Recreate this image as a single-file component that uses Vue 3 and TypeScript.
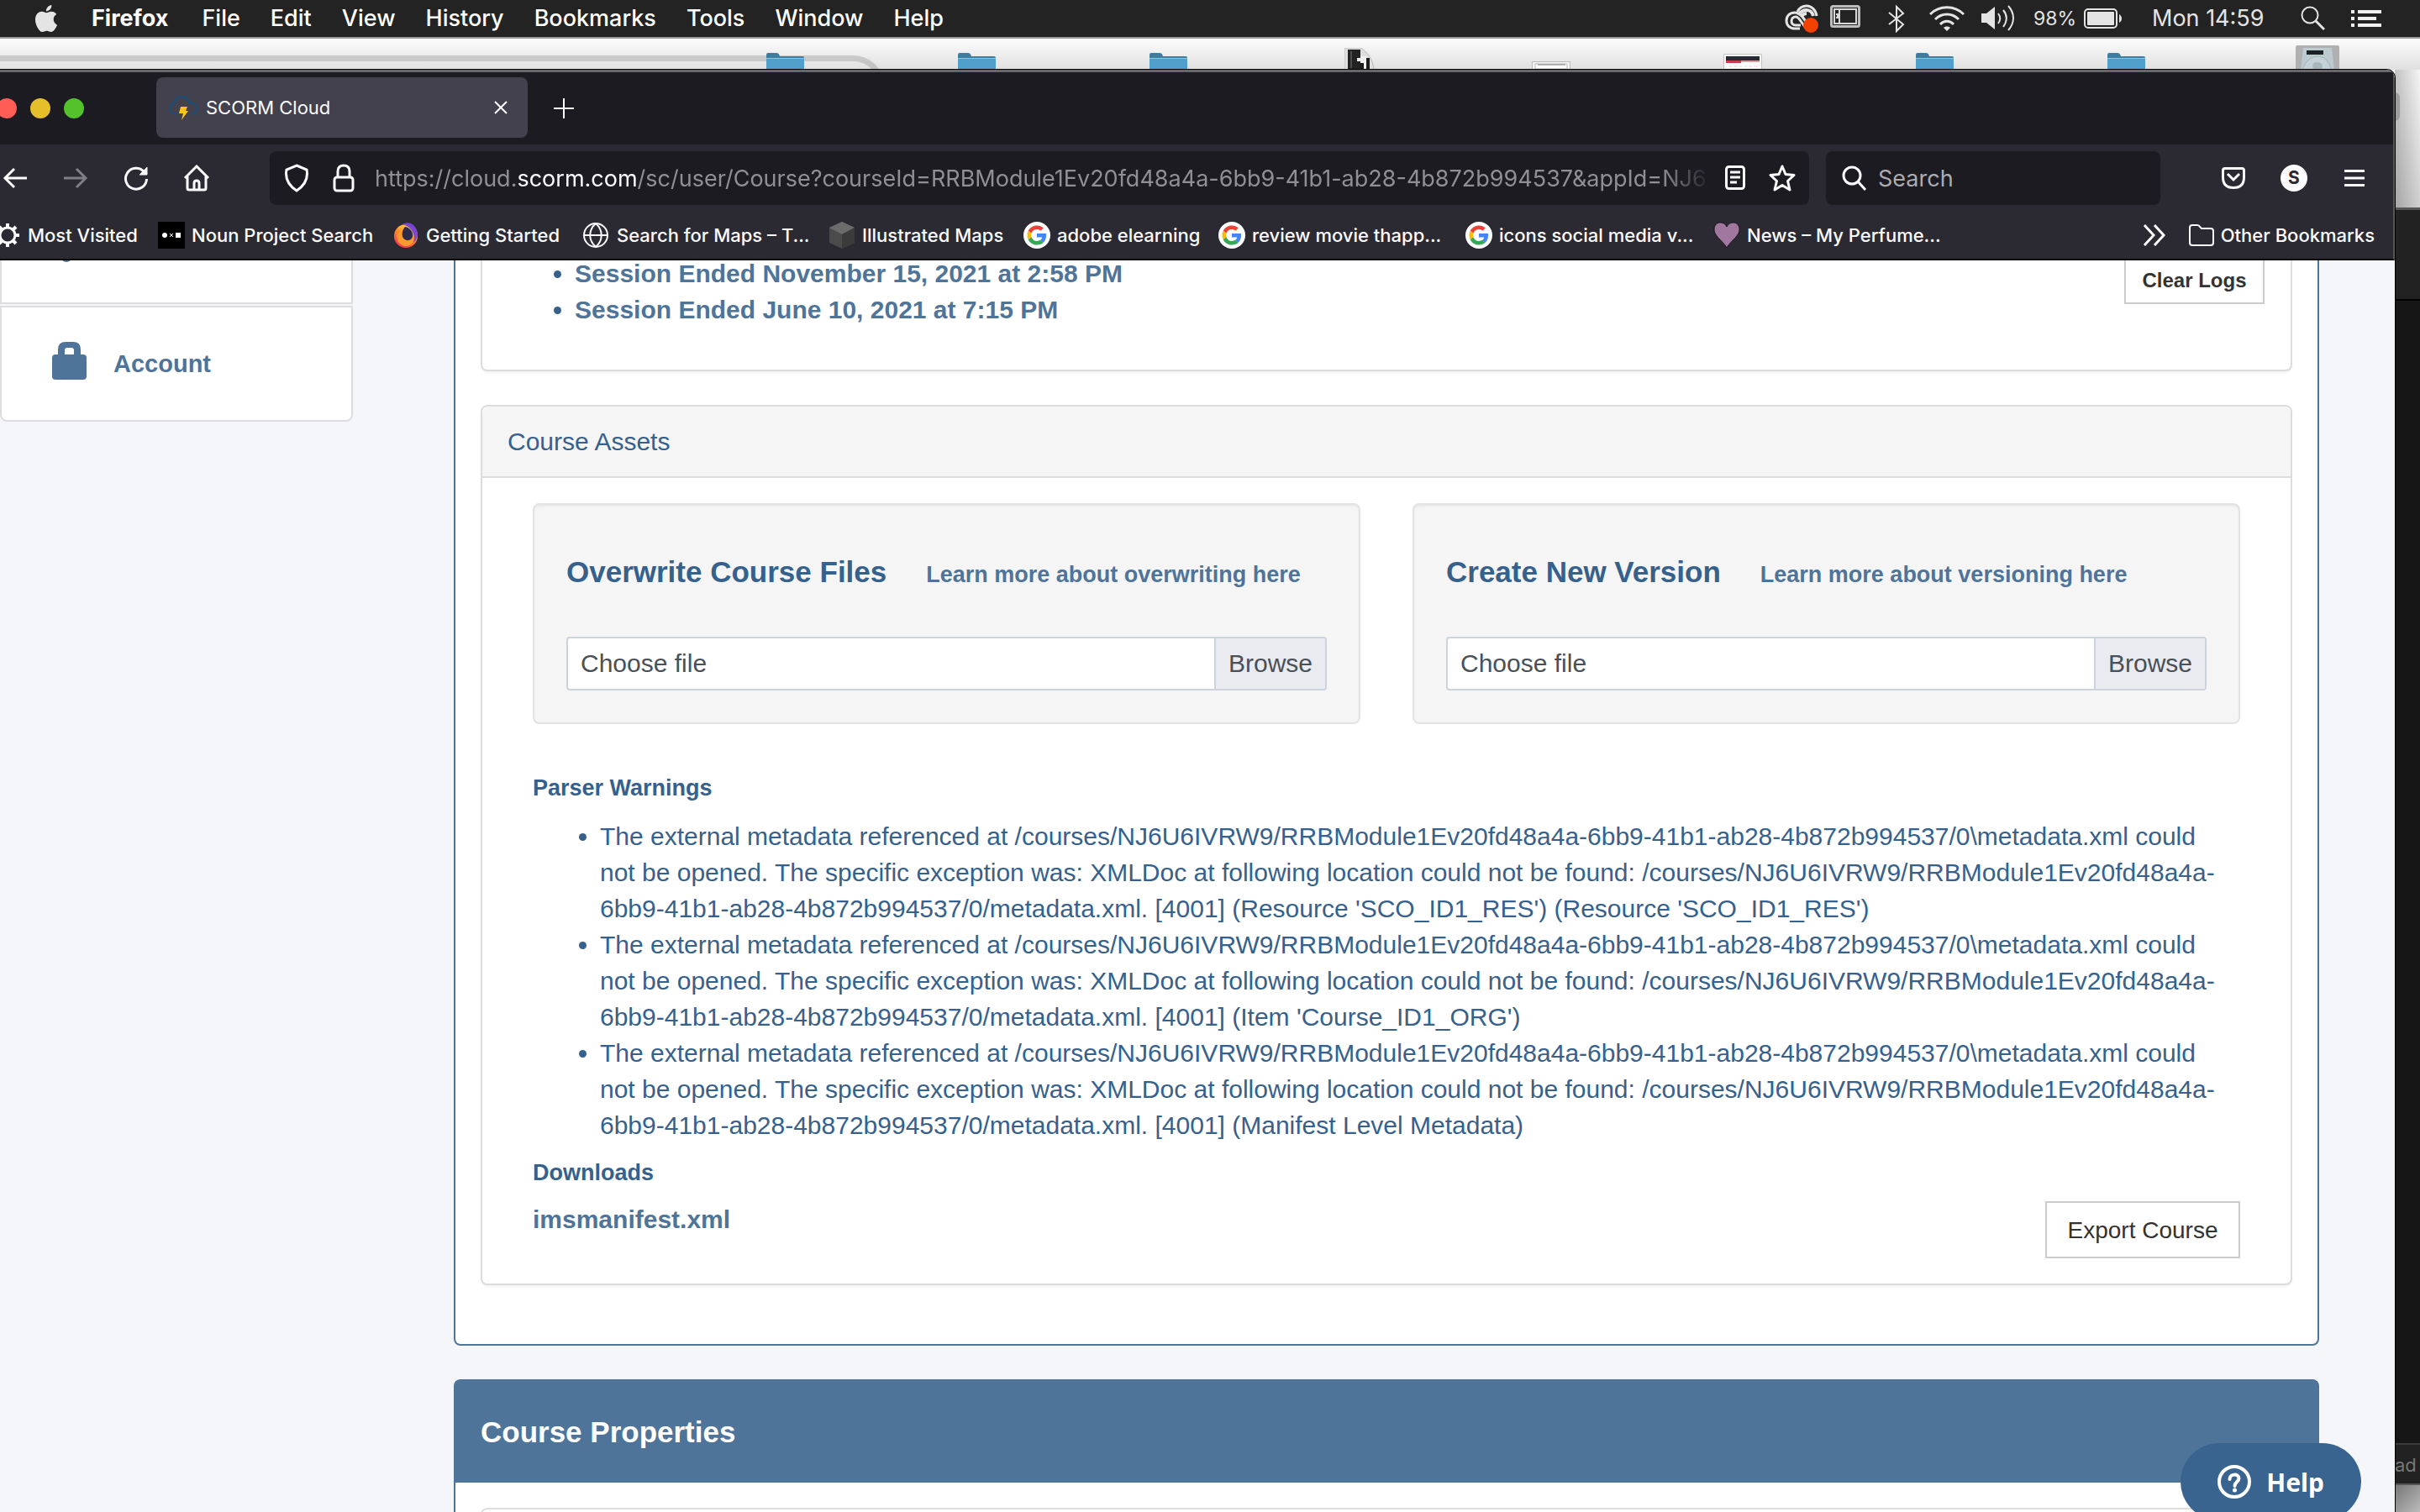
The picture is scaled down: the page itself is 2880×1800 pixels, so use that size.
<script setup lang="ts">
import { ref } from 'vue'

interface Bookmark {
  icon: 'gear' | 'noun' | 'firefox' | 'globe' | 'cube' | 'google' | 'heart'
  label: string
}

const menus = ['File', 'Edit', 'View', 'History', 'Bookmarks', 'Tools', 'Window', 'Help']

const desktopItems = ['folder', 'folder', 'folder', 'photo', 'sheet', 'page', 'folder', 'folder', 'drive']

const bookmarks: Bookmark[] = [
  { icon: 'gear', label: 'Most Visited' },
  { icon: 'noun', label: 'Noun Project Search' },
  { icon: 'firefox', label: 'Getting Started' },
  { icon: 'globe', label: 'Search for Maps – T...' },
  { icon: 'cube', label: 'Illustrated Maps' },
  { icon: 'google', label: 'adobe elearning' },
  { icon: 'google', label: 'review movie thapp...' },
  { icon: 'google', label: 'icons social media v...' },
  { icon: 'heart', label: 'News – My Perfume...' },
]

const sessions = [
  'Session Ended November 15, 2021 at 2:58 PM',
  'Session Ended June 10, 2021 at 7:15 PM',
]

const uploads = [
  { id: 'overwrite', title: 'Overwrite Course Files', link: 'Learn more about overwriting here' },
  { id: 'version', title: 'Create New Version', link: 'Learn more about versioning here' },
]

const courseId = 'RRBModule1Ev20fd48a4a-6bb9-41b1-ab28-4b872b994537'
const coursePath = `/courses/NJ6U6IVRW9/${courseId}/0`
const warningSources = [
  "(Resource 'SCO_ID1_RES') (Resource 'SCO_ID1_RES')",
  "(Item 'Course_ID1_ORG')",
  '(Manifest Level Metadata)',
]
const warnings = warningSources.map(
  (source) =>
    `The external metadata referenced at ${coursePath}\\metadata.xml could not be opened. ` +
    `The specific exception was: XMLDoc at following location could not be found: ${coursePath}/metadata.xml. [4001] ${source}`,
)

const query = ref('')
</script>

<template>
  <div class="screen">
    <header class="menubar">
      <nav class="menus">
        <svg class="apple" viewBox="0 0 24 24" width="32" height="32"><path fill="#e4e4e4" d="M12.152 6.896c-.948 0-2.415-1.078-3.96-1.04-2.04.027-3.91 1.183-4.961 3.014-2.117 3.675-.546 9.103 1.519 12.09 1.013 1.454 2.208 3.09 3.792 3.039 1.52-.065 2.09-.987 3.935-.987 1.831 0 2.35.987 3.96.948 1.637-.026 2.676-1.48 3.676-2.948 1.156-1.688 1.636-3.325 1.662-3.415-.039-.013-3.182-1.221-3.22-4.857-.026-3.04 2.48-4.494 2.597-4.559-1.429-2.09-3.623-2.324-4.39-2.376-2-.156-3.675 1.09-4.61 1.09zM15.53 3.83c.843-1.012 1.4-2.427 1.245-3.83-1.207.052-2.662.805-3.532 1.818-.78.896-1.454 2.338-1.273 3.714 1.338.104 2.715-.688 3.559-1.701" /></svg>
        <strong>Firefox</strong>
        <span v-for="m in menus" :key="m">{{ m }}</span>
      </nav>
      <div class="status">
        <svg width="40" height="34" viewBox="0 0 40 34" fill="none" stroke="#e4e4e4">
          <path d="M38 14C37 7 32 2 26 2c-5 0-9 3-11 7" stroke-width="3" />
          <path d="M18 29h-6C6 29 2 25 2 19.500S6 10 12 10" stroke-width="3" />
          <path d="M12 10c4 0 6 2 9 5l6 8" stroke-width="3" />
          <path d="M19 25h-6c-3 0-5-2-5-5s2-5 5-5c2 0 4 2 6 5l5 7" stroke-width="3" />
          <path d="M17 12c2-3 5-5 9-5 4 0 7 3 8 7M20 14c2-2 4-3 6-3" stroke-width="4" />
          <circle cx="31" cy="25" r="9" fill="#f24100" stroke="none" />
        </svg>
        <svg width="40" height="36" viewBox="0 0 40 36" fill="none" stroke="#bdbdbd">
          <rect x="5.500" y="3.500" width="33" height="24" rx="2" stroke-width="3" />
          <rect x="9" y="7" width="26" height="17" stroke="#d8d8d8" stroke-width="2" />
          <path d="M15 7v17M11 13h2v4h-2" stroke="#d8d8d8" stroke-width="2" />
        </svg>
        <svg width="62" height="34" viewBox="0 0 62 34"><path d="M24 10l17 14-8 8V3l8 8-17 13" fill="none" stroke="#e4e4e4" stroke-width="2" /></svg>
        <svg width="42" height="32" viewBox="0 0 42 32" fill="none" stroke="#e4e4e4" stroke-width="3">
          <path d="M1 11c11-11 29-11 40 0M7 17c8-8 20-8 28 0M13 23c5-5 11-5 16 0" />
          <path d="M17 27c2-2 6-2 8 0l-4 4z" fill="#e4e4e4" stroke="none" />
        </svg>
        <svg width="62" height="32" viewBox="0 0 62 32">
          <path d="M10 10h6l10-8v27l-10-8h-6z" fill="#e4e4e4" />
          <path d="M30 10c3 4 3 8 0 12M36 6c5 6 5 13 0 20M42 1c8 9 8 20 0 29" fill="none" stroke="#e4e4e4" stroke-width="2" />
        </svg>
        <span class="percent">98%</span>
        <svg width="45" height="26" viewBox="0 0 45 26">
          <rect x="1" y="2" width="38" height="22" rx="4" fill="none" stroke="#e4e4e4" stroke-width="2" />
          <rect x="4" y="5" width="32" height="16" rx="1" fill="#e4e4e4" /><path d="M42 8c4 2 4 8 0 10z" fill="#e4e4e4" />
        </svg>
        <span class="clock">Mon 14:59</span>
        <svg width="29" height="30" viewBox="0 0 29 30" fill="none" stroke="#e4e4e4" stroke-width="2"><circle cx="11" cy="11" r="9.500" /><path d="M18 18l10 10" stroke-width="3" /></svg>
        <svg width="57" height="24" viewBox="0 0 57 24" fill="#f0f0f0"><path d="M21 2h4v4h-4zM29 2h28v4H29zM21 10h4v4h-4zM29 10h22v4H29zM21 18h4v4h-4zM29 18h28v4H29z" /></svg>
      </div>
    </header>

    <div class="stage">
      <div class="ghost-line"></div>
      <div class="desktop-row">
        <div v-for="(kind, i) in desktopItems" :key="i" class="desktop-item">
          <svg v-if="kind === 'folder'" width="45" height="20" viewBox="0 0 45 20">
            <path d="M0 20V2q0-2 2-2h10q3 0 4 4h27q2 0 2 2v14z" fill="#3f7d9f" /><path d="M0 6h45v14H0z" fill="#4f9fca" /><path d="M0 6h45v1H0z" fill="#8cc4df" />
          </svg>
          <svg v-else-if="kind === 'photo'" width="36" height="26" viewBox="0 0 36 26">
            <path d="M0 0h20q14 10 15 26H0z" fill="#dedede" stroke="#bbb" /><path d="M4 2h15v24H4z" fill="#222" /><path d="M8 4v20" stroke="#777" /><path d="M15 12h4v4h-4zM19 10h8v14h-8z" fill="#eee" /><path d="M19 18h4v8h-4zM26 12h4v14h-4z" fill="#1b1b1b" />
          </svg>
          <svg v-else-if="kind === 'sheet'" width="46" height="10" viewBox="0 0 46 10">
            <path d="M.5 10V.5h45V10" fill="#f4f4f4" stroke="#bbb" /><path d="M4 10V3h38v7" fill="#fff" stroke="#bbb" /><path d="M7 4h33" stroke="#777" stroke-width="1" /><path d="M4 9h38" stroke="#bbb" />
          </svg>
          <svg v-else-if="kind === 'page'" width="46" height="19" viewBox="0 0 46 19">
            <path d="M.5 19V.500h45V19" fill="#fafafa" stroke="#c4c4c4" /><path d="M3 3h40v7H3z" fill="#252a35" /><path d="M3 8h18v3H3z" fill="#c83c4c" /><path d="M21 8h22v2H21z" fill="#e09aa2" /><path d="M7 15h33" stroke="#ddd" stroke-dasharray="3 3" />
          </svg>
          <svg v-else width="52" height="29" viewBox="0 0 52 29">
            <rect width="52" height="34" rx="2" fill="#b0b0b0" /><path d="M6 29L9 3h34l3 26z" fill="#bccbd0" /><path d="M8 29q6-17 20-16 12 2 14 16" fill="#c4d2d7" stroke="#a3b3b9" /><ellipse cx="26" cy="25" rx="6" ry="5" fill="#a5b6bc" /><path d="M13 6h20v5H13z" fill="#1c2124" />
          </svg>
        </div>
      </div>

      <aside class="behind">
        <div class="wallpaper"><i></i></div>
        <div class="other-top"></div>
        <div class="other-mid"></div>
        <div class="other-foot">ad</div>
        <div class="other-end"></div>
      </aside>

      <main class="browser">
        <div class="chrome">
          <div class="tabbar">
            <div class="lights"><i class="red"></i><i class="yellow"></i><i class="green"></i></div>
            <div class="tab">
              <svg width="34" height="30" viewBox="0 0 34 30">
                <path d="M8 23c-6-1-8-5-7-8 1-3 3-4 5-4 0-6 5-9 9-9 5 0 8 3 9 7 5 0 9 3 9 7s-3 7-7 7" fill="none" stroke="#17507c" stroke-width="2" /><path d="M14 14h8l-2 5h3l-8 11 2-8h-5z" fill="#ffc514" />
              </svg>
              <span>SCORM Cloud</span>
              <button aria-label="Close tab"><svg width="16" height="16" viewBox="0 0 16 16"><path d="M1 1l14 14M15 1L1 15" stroke="#fbfbfe" stroke-width="2" /></svg></button>
            </div>
            <button class="newtab" aria-label="New tab"><svg width="24" height="24" viewBox="0 0 24 24"><path d="M12 0v24M0 12h24" stroke="#fbfbfe" stroke-width="2" /></svg></button>
          </div>

          <div class="toolbar">
            <div class="nav">
              <button aria-label="Back"><svg width="30" height="26" viewBox="0 0 30 26"><path d="M29 13H3M14 2L3 13l11 11" /></svg></button>
              <button class="dim" aria-label="Forward"><svg width="30" height="26" viewBox="0 0 30 26"><path d="M1 13h26M16 2l11 11-11 11" /></svg></button>
              <button aria-label="Reload"><svg width="30" height="30" viewBox="0 0 30 30"><path d="M24 7A12.500 12.500 0 1 0 27.500 16" /><path d="M28 2v9h-9z" fill="#fbfbfe" stroke-width="1" /></svg></button>
              <button aria-label="Home"><svg width="32" height="32" viewBox="0 0 32 32"><path d="M2 16L16 2l14 14M5 14v14q0 2 2 2h18q2 0 2-2V14M13 30v-8q0-3 3-3t3 3v8" /></svg></button>
            </div>
            <div class="urlbar">
              <button class="narrow" aria-label="Tracking protection"><svg width="30" height="34" viewBox="0 0 30 34"><path d="M15 2L27 7q3 15-12 25Q0 22 3 7z" /></svg></button>
              <button class="narrow" aria-label="Site security"><svg width="26" height="34" viewBox="0 0 26 34"><path d="M6 16V9q0-7 7-7t7 7v7" /><rect x="2" y="16" width="22" height="16" rx="3" /></svg></button>
              <div class="url">https://cloud.<b>scorm.com</b>/sc/user/Course?courseId={{ courseId }}&amp;appId=NJ6</div>
              <button class="narrow" aria-label="Reader view"><svg width="24" height="30" viewBox="0 0 24 30"><rect x="1.500" y="1.500" width="21" height="26" rx="3" /><path d="M6 8h12M6 14h12M6 20h8" /></svg></button>
              <button class="narrow" aria-label="Bookmark this page"><svg width="32" height="32" viewBox="0 0 32 32"><path d="M16 2l4 9.500 10 1-7.500 7L25 30l-9-5.500L7 30l2.500-10.500L2 12.500l10-1z" stroke-linejoin="round" /></svg></button>
            </div>
            <label class="searchbox">
              <svg width="30" height="30" viewBox="0 0 30 30"><circle cx="12" cy="12" r="10" /><path d="M19 19l9 10" /></svg>
              <input v-model="query" type="text" placeholder="Search" aria-label="Search" />
            </label>
            <div class="tools">
              <button aria-label="Pocket"><svg width="28" height="26" viewBox="0 0 28 26"><path d="M4 1.500h20q2.500 0 2.500 2.500v8q0 12.500-12.500 12.500T1.500 12V4q0-2.500 2.500-2.500zM7 8l7 7 7-7" /></svg></button>
              <button aria-label="Account"><span class="avatar">S</span></button>
              <button aria-label="Menu"><svg width="24" height="20" viewBox="0 0 24 20"><path d="M0 1.500h24M0 10h24M0 18.500h24" /></svg></button>
            </div>
          </div>

          <div class="bookmarks">
            <a v-for="b in bookmarks" :key="b.label" href="#">
              <svg v-if="b.icon === 'gear'" width="32" height="32" viewBox="0 0 32 32" fill="none" stroke="#fbfbfe"><circle cx="16" cy="16" r="9" stroke-width="3" /><path d="M16 2v5M16 25v5M2 16h5M25 16h5M6 6l4 4M22 22l4 4M6 26l4-4M22 10l4-4" stroke-width="4" /></svg>
              <svg v-else-if="b.icon === 'noun'" width="32" height="32" viewBox="0 0 32 32"><path d="M0 0h32v32H0z" /><circle cx="8" cy="16" r="3" fill="#fff" /><path d="M14 14l4 4M18 14l-4 4" stroke="#fff" stroke-width="1" /><path d="M21 13h6v6h-6z" fill="#fff" /></svg>
              <svg v-else-if="b.icon === 'firefox'" width="32" height="32" viewBox="0 0 32 32">
                <defs><linearGradient id="fx" x1="0.800" y1="0" x2="0.300" y2="1"><stop offset="0" stop-color="#ffe14a" /><stop offset=".5" stop-color="#ff8a2b" /><stop offset="1" stop-color="#ff2f55" /></linearGradient></defs>
                <circle cx="16" cy="17" r="14" fill="url(#fx)" /><path d="M12 3c9-5 18 2 18 13-1 5-3 7-5 9 2-8 0-13-4-17-3-3-6-4-9-5z" fill="#7a45d0" /><path d="M15 6c6 1 10 6 9 12-2 5-9 6-12 1-2-4 0-9 3-13z" fill="#2d2b4c" /><path d="M12 11c-2 7 2 12 8 11 4-1 5-4 5-7 2 8-2 14-9 14S4 22 6 15c1-3 3-4 6-4z" fill="#ff9a2e" />
              </svg>
              <svg v-else-if="b.icon === 'globe'" width="32" height="32" viewBox="0 0 32 32" fill="none" stroke="#fbfbfe" stroke-width="2"><circle cx="15" cy="16" r="14" /><path d="M1 16h28M15 2c-9 8-9 20 0 28M15 2c9 8 9 20 0 28" /></svg>
              <svg v-else-if="b.icon === 'cube'" width="32" height="32" viewBox="0 0 32 32"><path d="M16 0l15 7v18l-15 7L1 25V7z" fill="#4b4b4b" /><path d="M16 0l15 7-15 8L1 7z" fill="#6c6c6c" /><path d="M16 15l15-8v18l-15 7z" fill="#3b3b3b" /></svg>
              <svg v-else-if="b.icon === 'google'" width="32" height="32" viewBox="0 0 72 72">
                <circle cx="36" cy="36" r="36" fill="#fff" />
                <g transform="translate(10 10) scale(1.083)"><path fill="#ea4335" d="M24 9.500c3.540 0 6.710 1.220 9.210 3.600l6.850-6.850C35.900 2.380 30.470 0 24 0 14.620 0 6.510 5.380 2.560 13.220l7.980 6.190C12.430 13.720 17.740 9.500 24 9.500z" /><path fill="#4285f4" d="M46.980 24.550c0-1.570-.15-3.090-.38-4.550H24v9.020h12.940c-.58 2.960-2.260 5.480-4.780 7.180l7.730 6c4.510-4.180 7.090-10.360 7.090-17.650z" /><path fill="#fbbc05" d="M10.530 28.590c-.48-1.450-.76-2.990-.76-4.590s.27-3.140.76-4.590l-7.980-6.190C.92 16.460 0 20.120 0 24c0 3.880.92 7.540 2.560 10.780l7.970-6.190z" /><path fill="#34a853" d="M24 48c6.480 0 11.930-2.130 15.890-5.810l-7.730-6c-2.150 1.450-4.920 2.300-8.160 2.300-6.260 0-11.570-4.220-13.470-9.910l-7.980 6.190C6.510 42.620 14.620 48 24 48z" /></g>
              </svg>
              <svg v-else width="32" height="32" viewBox="0 0 32 32"><path d="M16 31C11 22 0 17 1 8 2-1 13-1 16 6c3-7 14-7 15 2 1 9-10 14-15 23z" fill="#a0779f" stroke="#17151c" /></svg>
              <span>{{ b.label }}</span>
            </a>
            <button class="more" aria-label="More bookmarks"><svg width="28" height="26" viewBox="0 0 28 26"><path d="M2 1l11 12L2 25M14 1l11 12-11 12" /></svg></button>
            <a href="#" class="other">
              <svg width="30" height="26" viewBox="0 0 30 26" fill="none" stroke="#fbfbfe" stroke-width="2"><path d="M1 4q0-3 3-3h6q2 0 3 2l2 2h11q3 0 3 3v14q0 3-3 3H4q-3 0-3-3z" /></svg>
              <span>Other Bookmarks</span>
            </a>
          </div>
        </div>

        <div class="page">
          <aside class="sidebar">
            <div class="side-item cut"><svg width="10" height="3" viewBox="0 0 10 3"><path d="M0 0q5 4 10 0z" fill="#4f7499" /></svg></div>
            <a href="#" class="side-item">
              <svg width="41" height="45" viewBox="0 0 41 45"><path d="M4 15h3V9q0-9 9-9h9q9 0 9 9v6h3q4 0 4 4v22q0 4-4 4H4q-4 0-4-4V19q0-4 4-4zm11 0h11v-5q0-3-3-3h-5q-3 0-3 3z" fill="#4f7499" fill-rule="evenodd" /></svg>
              <span>Account</span>
            </a>
          </aside>

          <div class="column">
            <section class="course">
              <div class="panel logs">
                <ul>
                  <li v-for="s in sessions" :key="s"><a href="#">{{ s }}</a></li>
                </ul>
                <button class="clear">Clear Logs</button>
              </div>

              <div class="panel">
                <h3 class="panel-head">Course Assets</h3>
                <div class="panel-body">
                  <div class="wells">
                    <div v-for="u in uploads" :key="u.id" class="well">
                      <div class="well-head"><h2>{{ u.title }}</h2><a href="#">{{ u.link }}</a></div>
                      <label class="file" :for="u.id">
                        <input :id="u.id" type="file" />
                        <span class="name">Choose file</span><span class="browse">Browse</span>
                      </label>
                    </div>
                  </div>
                  <h4 class="warn-title">Parser Warnings</h4>
                  <ul class="warnings">
                    <li v-for="w in warnings" :key="w">{{ w }}</li>
                  </ul>
                  <h4 class="down-title">Downloads</h4>
                  <div class="downloads">
                    <a href="#">imsmanifest.xml</a>
                    <button>Export Course</button>
                  </div>
                </div>
              </div>
            </section>

            <section class="properties">
              <h2>Course Properties</h2>
              <div class="panel"></div>
            </section>
          </div>

          <button class="help">
            <svg width="40" height="40" viewBox="0 0 40 40" fill="none" stroke="#fff" stroke-width="4"><circle cx="20" cy="20" r="18" /><path d="M14.500 17c0-7 11-7 11-1 0 4-5 4-5 9" stroke-linecap="round" /><circle cx="20.500" cy="30" r="2.500" fill="#fff" stroke="none" /></svg>
            <span>Help</span>
          </button>
        </div>
      </main>
    </div>
  </div>
</template>

<style>
html, body { margin: 0; height: 100%; overflow: hidden; }
</style>

<style scoped>
* { box-sizing: border-box; }
a { text-decoration: none; color: inherit; }
button { background: none; border: 0; padding: 0; font: inherit; color: inherit; }
svg { display: block; flex: none; }
h2, h3, h4, ul { margin: 0; padding: 0; }

.screen { height: 100vh; display: flex; flex-direction: column; overflow: hidden; font-family: "Liberation Sans", Arial, sans-serif; }

.menubar { flex: none; height: 46px; background: #232323; border-bottom: 2px solid #9b9b9b; display: flex; align-items: center; justify-content: space-between; color: #fff; font: 500 27px/44px Inter, sans-serif; white-space: nowrap; }
.menus { display: flex; align-items: center; gap: 36px; padding-left: 39px; }
.menus strong { padding: 0 4px 0 2px; }
.status { display: flex; align-items: center; gap: 10px; padding-right: 46px; color: #e4e4e4; font-weight: 400; }
.percent { width: 50px; font-size: 23px; }
.clock { width: 193px; padding-left: 26px; }

.stage { flex: 1; min-height: 0; position: relative; display: flex; flex-direction: column; background: #fff; }
.desktop-row { flex: none; height: 37px; display: flex; justify-content: flex-end; align-items: flex-end; padding-right: 8px; background: linear-gradient(#fcfcfc, #e0e0e0); }
.desktop-item { width: 228px; display: flex; justify-content: center; position: relative; }
.ghost-line { position: absolute; left: 0; top: 20px; width: 1052px; height: 60px; border: 7px solid rgba(0, 0, 0, .14); border-left: 0; border-radius: 0 36px 0 0; }

.behind { position: absolute; right: 0; top: 37px; bottom: 0; width: 60px; padding-left: 30px; display: flex; flex-direction: column; }
.wallpaper { height: 164px; padding-top: 27px; background: linear-gradient(to right, rgba(0, 0, 0, .24), rgba(0, 0, 0, 0) 120%), linear-gradient(#fff, #d8d8d8); }
.wallpaper i { display: block; width: 6px; height: 34px; border-radius: 0 6px 6px 0; background: #9d9d9d; }
.other-top { height: 111px; background: #222; border-top: 3px solid #555; border-bottom: 2px solid #000; }
.other-mid { flex: 1; background: #161616; }
.other-foot { height: 50px; background: #222; border-top: 2px solid #3a3a3a; border-bottom: 2px solid #555; color: #777; font: 22px/48px Inter, sans-serif; }
.other-end { height: 32px; background: linear-gradient(135deg, #777, #bbb); }

.browser { flex: 1; min-height: 0; position: relative; margin-right: 30px; display: flex; flex-direction: column; border-top-right-radius: 10px; overflow: hidden; box-shadow: 0 0 0 1px #000; }
.chrome { flex: none; border-top: 3px solid #66666b; border-right: 2px solid #55555a; border-bottom: 2px solid #0c0c0d; border-top-right-radius: 10px; background: #2b2a33; color: #fbfbfe; font-family: Inter, sans-serif; white-space: nowrap; }
.chrome button svg, .searchbox svg { fill: none; stroke: #fbfbfe; stroke-width: 3; }
.chrome button { display: flex; align-items: center; justify-content: center; }

.tabbar { height: 86px; background: #1c1b22; display: flex; align-items: center; }
.lights { display: flex; gap: 16px; width: 186px; margin-left: -4px; padding-right: 4px; }
.lights i { width: 24px; height: 24px; border-radius: 50%; }
.red { background: #ff5d55; }
.yellow { background: #e6c02a; }
.green { background: #53c22b; }
.tab { width: 442px; height: 72px; margin: 0 0 2px 4px; padding: 0 24px 0 15px; display: flex; align-items: center; gap: 10px; border-radius: 8px; background: #42414d; font-size: 22px; }
.tab span { flex: 1; }
.chrome .tab button svg { stroke-width: 2; }
.newtab { margin-left: 31px; }
.chrome .newtab svg { stroke-width: 2; }

.toolbar { height: 72px; display: flex; align-items: center; padding: 8px 10px 0 0; font-size: 27px; }
.nav { display: flex; width: 321px; margin-left: -18px; margin-right: 18px; }
.nav button, .tools button { width: 72px; height: 64px; }
.dim { opacity: .4; }
.urlbar { flex: 1; min-width: 0; height: 64px; display: flex; align-items: center; padding: 0 4px; border-radius: 8px; background: #1c1b22; }
.narrow { flex: none; width: 56px; height: 56px; }
.url { flex: 1; min-width: 0; margin: 0 0 0 9px; overflow: hidden; color: #8f8f95; -webkit-mask-image: linear-gradient(to left, transparent, #000 60px); mask-image: linear-gradient(to left, transparent, #000 60px); }
.url b { color: #fbfbfe; font-weight: 400; }
.searchbox { width: 398px; height: 64px; margin-left: 20px; padding-left: 19px; display: flex; align-items: center; gap: 13px; border-radius: 8px; background: #1c1b22; }
.searchbox input { flex: 1; min-width: 0; border: 0; outline: 0; background: none; color: #fbfbfe; font: 27px Inter, sans-serif; padding: 0; }
.searchbox input::placeholder { color: #acacb0; opacity: 1; }
.tools { display: flex; margin-left: 51px; }
.avatar { width: 32px; height: 32px; border-radius: 50%; background: #fbfbfe; color: #2b2a33; font: 700 21px/32px Inter, sans-serif; }

.bookmarks { height: 64px; margin-left: -7px; padding-top: 8px; display: grid; grid-template-columns: 195px 279px 227px 292px 232px 232px 294px 295px 1fr auto auto; align-items: center; font-size: 22px; font-weight: 500; }
.bookmarks a { display: flex; align-items: center; gap: 8px; }
.more { width: 28px; margin-right: 27px; }
.bookmarks .other { padding-right: 22px; }

.page { flex: 1; min-height: 0; overflow: hidden; display: flex; align-items: flex-start; padding-right: 90px; background: #f4f6f9; color: #36618c; font-size: 30px; line-height: 43px; }
.sidebar { flex: none; width: 420px; margin-right: 120px; }
.side-item { height: 138px; display: flex; align-items: center; gap: 32px; padding: 0 60px; background: #fff; border: 2px solid #ddd; border-radius: 0 0 8px 8px; color: #4f7499; font-size: 29px; font-weight: 700; }
.side-item svg { margin-bottom: 8px; }
.cut { height: 52px; align-items: flex-start; margin-bottom: 2px; padding-left: 72px; border-top: 0; border-radius: 0; }

.column { flex: 1; min-width: 0; }
.course { padding: 0 30px 70px; border: 2px solid #4f7499; border-top: 0; border-radius: 0 0 8px 8px; background: #fff; }
.panel { border: 2px solid #ddd; border-radius: 8px; background: #fff; box-shadow: 0 2px 2px rgba(0, 0, 0, .05); }
.logs { height: 132px; display: flex; justify-content: space-between; align-items: flex-start; padding: 0 31px 0 110px; border-top: 0; border-radius: 0 0 8px 8px; margin-bottom: 40px; }
.logs ul { margin-top: -6px; }
.logs a, .well-head a, .downloads a { color: #4f7499; font-weight: 700; }
.clear { height: 58px; width: 167px; margin-top: -6px; border: 2px solid #ccc; background: #fff; color: #333; font-size: 24px; font-weight: 700; }

.panel-head { padding: 20px 30px; border-bottom: 2px solid #ddd; border-radius: 8px 8px 0 0; background: #f5f5f5; font-size: 30px; font-weight: 400; }
.panel-body { padding: 30px 60px; }
.wells { display: grid; grid-template-columns: 1fr 1fr; gap: 62px; }
.well { padding: 60px 38px 38px; border: 2px solid #e3e3e3; border-radius: 8px; background: #f5f5f5; box-shadow: inset 0 2px 2px rgba(0, 0, 0, .05); }
.well-head { display: flex; align-items: baseline; gap: 47px; margin-bottom: 54px; line-height: 40px; }
.well-head h2 { font-size: 35px; }
.well-head a { font-size: 27px; }
.file { position: relative; display: flex; height: 64px; border: 2px solid #cbd3dd; border-radius: 4px; background: #fff; color: #495057; line-height: 60px; overflow: hidden; }
.file input { position: absolute; inset: 0; width: 100%; opacity: 0; }
.name { flex: 1; padding-left: 15px; }
.browse { padding: 0 15px; border-left: 2px solid #cbd3dd; background: #e9ebf0; }

h4 { font-size: 27px; line-height: 30px; }
.warn-title { margin: 61px 0 21px; }
.warnings { padding: 0 10px 0 80px; }
.down-title { margin: 20px 0 19px; }
.downloads { display: flex; justify-content: space-between; align-items: flex-start; }
.downloads button { width: 232px; height: 68px; border: 2px solid #ccc; background: #fff; color: #333; font-size: 28px; }

.properties { margin-top: 40px; border: 2px solid #4f7499; border-radius: 8px; background: #fff; }
.properties h2 { padding: 39px 30px; background: #4f7499; color: #fff; font-size: 35px; line-height: 43px; }
.properties .panel { height: 300px; margin: 30px; }

.help { position: absolute; right: 40px; bottom: -10px; display: flex; align-items: center; gap: 18px; height: 92px; padding: 0 44px; border-radius: 46px; background: #39648f; color: #fff; font: 700 30px "Noto Sans", sans-serif; }
</style>
